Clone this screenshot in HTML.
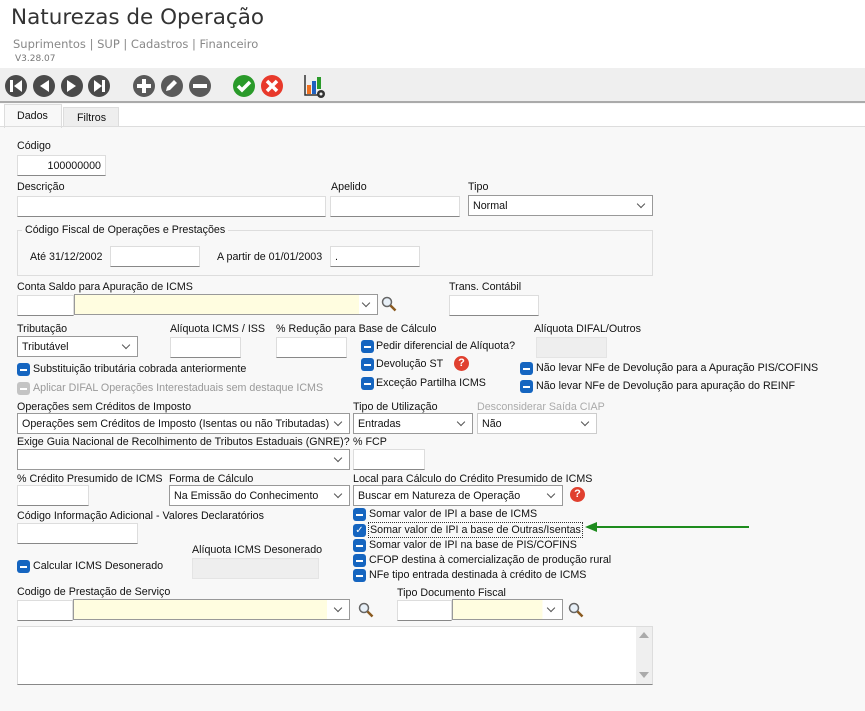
<!DOCTYPE html>
<html><head><meta charset="utf-8"><style>
*{box-sizing:border-box;margin:0;padding:0}
body{width:865px;height:711px;overflow:hidden;background:#f8f8f8;font-family:"Liberation Sans",sans-serif;font-size:10.7px;color:#111;position:relative}
.a{position:absolute;white-space:nowrap}
.i{position:absolute;background:#fff;border:1px solid #ddd;border-bottom:1px solid #888;height:21px;padding:4px 4px;font-size:10.7px;white-space:nowrap;overflow:hidden}
.s::after{content:"";position:absolute;right:8px;top:5px;width:5px;height:5px;border-right:1px solid #555;border-bottom:1px solid #555;transform:rotate(45deg)}
.s{border:1px solid #999}
.d{background:#eee;border:1px solid #e4e4e4}
.cb{position:absolute;width:13px;height:13px;background:#1565c0;border-radius:3px}
.cb::after{content:"";position:absolute;left:3px;top:6px;width:7px;height:1.5px;background:#fff}
.g{background:#c4c4c4}
.q{position:absolute;width:15px;height:15px;border-radius:50%;background:#e0402f;color:#fff;font-weight:bold;font-size:11px;text-align:center;line-height:15px}
.mag{position:absolute;width:16px;height:16px}
</style></head><body>
<div class="a" style="left:0;top:0;width:865px;height:68px;background:#fff"></div>
<div class="a" style="left:11px;top:5px;font-family:'DejaVu Sans',sans-serif;font-size:21.5px;color:#333">Naturezas de Operação</div>
<div class="a" style="left:13px;top:37px;font-family:'DejaVu Sans',sans-serif;font-size:11.5px;color:#888">Suprimentos | SUP | Cadastros | Financeiro</div>
<div class="a" style="left:15px;top:54px;font-family:'DejaVu Sans',sans-serif;font-size:9px;color:#777">V3.28.07</div>
<div class="a" style="left:0;top:68px;width:865px;height:35px;background:#efefef;border-bottom:2px solid #aaa"></div>
<svg class="a" style="left:0;top:68px" width="340" height="35">
<g fill="#4a4a4a"><circle cx="16" cy="18" r="11"/><circle cx="44" cy="18" r="11"/><circle cx="72" cy="18" r="11"/><circle cx="99" cy="18" r="11"/></g>
<g fill="#fff"><rect x="10" y="12" width="3" height="12"/><path d="M22 12v12l-8-6z"/><path d="M49 12v12l-9-6z"/><path d="M67 12v12l9-6z"/><path d="M94 12v12l8-6z"/><rect x="102" y="12" width="3" height="12"/></g>
<g fill="#5a5a5a"><circle cx="144" cy="18" r="11"/><circle cx="172" cy="18" r="11"/><circle cx="200" cy="18" r="11"/></g>
<g fill="#fff"><rect x="137" y="16" width="14" height="4"/><rect x="142" y="11" width="4" height="14"/><path d="M166 23l1-4 7-7 3 3-7 7z"/><rect x="193" y="16" width="14" height="4"/></g>
<circle cx="244" cy="18" r="11" fill="#2a9a2a"/><path d="M238 18l4 4 8-8" stroke="#fff" stroke-width="3.5" fill="none"/>
<circle cx="272" cy="18" r="11" fill="#e8392b"/><path d="M267 13l10 10M277 13l-10 10" stroke="#fff" stroke-width="3.5"/>
<path d="M305 7v20h18" stroke="#333" stroke-width="1.5" fill="none"/><rect x="307" y="17" width="4" height="9" fill="#f07020"/><rect x="312" y="13" width="4" height="13" fill="#2060c0"/><rect x="317" y="9" width="4" height="12" fill="#2a9a2a"/><circle cx="321" cy="26" r="4" fill="#333"/><circle cx="321" cy="26" r="1.5" fill="#efefef"/>
</svg>
<div class="a" style="left:0;top:104px;width:865px;height:22px;background:#fff"></div>
<div class="a" style="left:4px;top:104px;width:58px;height:24px;background:#f8f8f8;border:1px solid #ddd;border-bottom:none;padding:5px 12px">Dados</div>
<div class="a" style="left:63px;top:107px;width:56px;height:20px;background:#eee;border:1px solid #ddd;padding:4px 13px">Filtros</div>
<div class="a" style="left:0;top:126px;width:865px;height:1px;background:#ddd"></div>

<div class="a" style="left:17px;top:140px">Código</div>
<div class="i" style="left:17px;top:155px;width:89px;text-align:right">100000000</div>
<div class="a" style="left:17px;top:181px">Descrição</div>
<div class="i" style="left:17px;top:196px;width:309px"></div>
<div class="a" style="left:331px;top:181px">Apelido</div>
<div class="i" style="left:330px;top:196px;width:130px"></div>
<div class="a" style="left:468px;top:181px">Tipo</div>
<div class="i s" style="left:468px;top:195px;width:185px">Normal</div>

<div class="a" style="left:17px;top:230px;width:636px;height:46px;border:1px solid #ddd"></div>
<div class="a" style="left:22px;top:224px;background:#f8f8f8;padding:0 3px">Código Fiscal de Operações e Prestações</div>
<div class="a" style="left:30px;top:251px">Até 31/12/2002</div>
<div class="i" style="left:110px;top:246px;width:90px"></div>
<div class="a" style="left:217px;top:251px">A partir de 01/01/2003</div>
<div class="i" style="left:330px;top:246px;width:90px">.</div>

<div class="a" style="left:17px;top:281px">Conta Saldo para Apuração de ICMS</div>
<div class="i" style="left:17px;top:295px;width:57px"></div>
<div class="i s" style="left:74px;top:294px;width:304px;background:linear-gradient(90deg,#fffde0 94%,#fff 94%)"></div>
<svg class="mag" style="left:381px;top:296px" viewBox="0 0 16 16"><circle cx="6" cy="6" r="4.5" stroke="#666" stroke-width="1.5" fill="#e8f0f8"/><path d="M9.5 9.5l5 5" stroke="#8a5a20" stroke-width="2.5"/></svg>
<div class="a" style="left:449px;top:281px">Trans. Contábil</div>
<div class="i" style="left:449px;top:295px;width:90px"></div>

<div class="a" style="left:17px;top:323px">Tributação</div>
<div class="i s" style="left:17px;top:336px;width:121px">Tributável</div>
<div class="a" style="left:170px;top:323px">Alíquota ICMS / ISS</div>
<div class="i" style="left:170px;top:337px;width:71px"></div>
<div class="a" style="left:276px;top:323px">% Redução para Base de Cálculo</div>
<div class="i" style="left:276px;top:337px;width:71px"></div>
<div class="a" style="left:534px;top:323px">Alíquota DIFAL/Outros</div>
<div class="i d" style="left:536px;top:337px;width:71px"></div>
<div class="cb" style="left:361px;top:340px"></div><div class="a" style="left:376px;top:340px">Pedir diferencial de Alíquota?</div>
<div class="cb" style="left:361px;top:358px"></div><div class="a" style="left:376px;top:358px">Devolução ST</div>
<div class="q" style="left:454px;top:356px">?</div>
<div class="cb" style="left:361px;top:377px"></div><div class="a" style="left:376px;top:377px">Exceção Partilha ICMS</div>
<div class="cb" style="left:520px;top:362px"></div><div class="a" style="left:536px;top:362px">Não levar NFe de Devolução para a Apuração PIS/COFINS</div>
<div class="cb" style="left:520px;top:380px"></div><div class="a" style="left:536px;top:380px">Não levar NFe de Devolução para apuração do REINF</div>
<div class="cb" style="left:17px;top:363px"></div><div class="a" style="left:33px;top:363px">Substituição tributária cobrada anteriormente</div>
<div class="cb g" style="left:17px;top:382px"></div><div class="a" style="left:33px;top:382px;color:#999">Aplicar DIFAL Operações Interestaduais sem destaque ICMS</div>

<div class="a" style="left:17px;top:401px">Operações sem Créditos de Imposto</div>
<div class="i s" style="left:17px;top:413px;width:333px;padding-right:20px">Operações sem Créditos de Imposto (Isentas ou não Tributadas)</div>
<div class="a" style="left:353px;top:401px">Tipo de Utilização</div>
<div class="i s" style="left:353px;top:413px;width:120px">Entradas</div>
<div class="a" style="left:477px;top:401px;color:#aaa">Desconsiderar Saída CIAP</div>
<div class="i s" style="left:477px;top:413px;width:120px;border-color:#ccc">Não</div>

<div class="a" style="left:17px;top:436px">Exige Guia Nacional de Recolhimento de Tributos Estaduais (GNRE)?</div>
<div class="i s" style="left:17px;top:449px;width:333px"></div>
<div class="a" style="left:353px;top:436px">% FCP</div>
<div class="i" style="left:353px;top:449px;width:72px"></div>

<div class="a" style="left:17px;top:473px">% Crédito Presumido de ICMS</div>
<div class="i" style="left:17px;top:485px;width:72px"></div>
<div class="a" style="left:169px;top:473px">Forma de Cálculo</div>
<div class="i s" style="left:169px;top:485px;width:181px">Na Emissão do Conhecimento</div>
<div class="a" style="left:353px;top:473px">Local para Cálculo do Crédito Presumido de ICMS</div>
<div class="i s" style="left:353px;top:485px;width:210px">Buscar em Natureza de Operação</div>
<div class="q" style="left:570px;top:487px">?</div>

<div class="a" style="left:17px;top:510px">Código Informação Adicional - Valores Declaratórios</div>
<div class="i" style="left:17px;top:523px;width:121px"></div>
<div class="cb" style="left:353px;top:508px"></div><div class="a" style="left:369px;top:508px">Somar valor de IPI a base de ICMS</div>
<div class="a" style="left:353px;top:524px;width:13px;height:13px;background:#1565c0;border-radius:3px;color:#fff;font-size:10px;line-height:13px;text-align:center">✓</div><div class="a" style="left:368px;top:522px;border:1px dotted #333;padding:0 1px;line-height:14px">Somar valor de IPI a base de Outras/Isentas</div>
<div class="cb" style="left:353px;top:539px"></div><div class="a" style="left:369px;top:539px">Somar valor de IPI na base de PIS/COFINS</div>
<div class="cb" style="left:353px;top:554px"></div><div class="a" style="left:369px;top:554px">CFOP destina à comercialização de produção rural</div>
<div class="cb" style="left:353px;top:569px"></div><div class="a" style="left:369px;top:569px">NFe tipo entrada destinada à crédito de ICMS</div>
<svg class="a" style="left:585px;top:520px" width="170" height="14"><path d="M8 7H164" stroke="#1e8c1e" stroke-width="2"/><path d="M0 7l12-5v10z" fill="#1e8c1e"/></svg>

<div class="cb" style="left:17px;top:560px"></div><div class="a" style="left:33px;top:560px">Calcular ICMS Desonerado</div>
<div class="a" style="left:192px;top:544px">Alíquota ICMS Desonerado</div>
<div class="i d" style="left:192px;top:558px;width:127px"></div>

<div class="a" style="left:17px;top:586px">Codigo de Prestação de Serviço</div>
<div class="i" style="left:17px;top:600px;width:56px"></div>
<div class="i s" style="left:73px;top:599px;width:277px;background:linear-gradient(90deg,#fffde0 92%,#fff 92%)"></div>
<svg class="mag" style="left:358px;top:602px" viewBox="0 0 16 16"><circle cx="6" cy="6" r="4.5" stroke="#666" stroke-width="1.5" fill="#e8f0f8"/><path d="M9.5 9.5l5 5" stroke="#8a5a20" stroke-width="2.5"/></svg>
<div class="a" style="left:397px;top:587px">Tipo Documento Fiscal</div>
<div class="i" style="left:397px;top:600px;width:55px"></div>
<div class="i s" style="left:452px;top:599px;width:111px;background:linear-gradient(90deg,#fffde0 82%,#fff 82%)"></div>
<svg class="mag" style="left:568px;top:602px" viewBox="0 0 16 16"><circle cx="6" cy="6" r="4.5" stroke="#666" stroke-width="1.5" fill="#e8f0f8"/><path d="M9.5 9.5l5 5" stroke="#8a5a20" stroke-width="2.5"/></svg>

<div class="a" style="left:17px;top:626px;width:636px;height:59px;background:#fff;border:1px solid #ddd;border-bottom:1px solid #888"></div>
<div class="a" style="left:636px;top:627px;width:16px;height:57px;background:#efefef"></div>
<div class="a" style="left:639px;top:632px;width:0;height:0;border:5px solid transparent;border-bottom:6px solid #aaa;border-top:none"></div>
<div class="a" style="left:639px;top:672px;width:0;height:0;border:5px solid transparent;border-top:6px solid #aaa;border-bottom:none"></div>
</body></html>
